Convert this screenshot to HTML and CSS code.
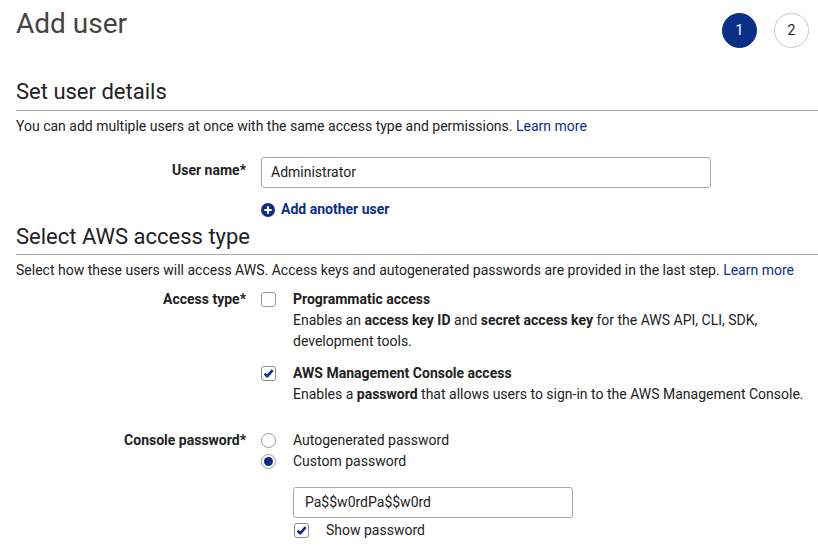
FILE: index.html
```html
<!DOCTYPE html>
<html lang="en">
<head>
<meta charset="utf-8">
<title>Add user</title>
<link rel="stylesheet" href="styles.css">
</head>
<body>
<div class="page">
  <header class="topbar">
    <h1 class="title">Add user</h1>
    <ol class="steps">
      <li class="step step-current">1</li>
      <li class="step">2</li>
    </ol>
  </header>

  <section class="section">
    <h2 class="section-title">Set user details</h2>
    <p class="section-desc">You can add multiple users at once with the same access type and permissions. <a class="link" href="#">Learn more</a></p>
    <div class="form-row row-username">
      <div class="form-label">User name*</div>
      <div class="form-control">
        <div class="text-input username-input">Administrator</div>
        <a class="add-link" href="#">
          <svg class="add-icon" width="14" height="14" viewBox="0 0 14 14" aria-hidden="true">
            <circle cx="7" cy="7" r="7" fill="#0a2f87"/>
            <path d="M7 3.3v7.4M3.3 7h7.4" stroke="#fff" stroke-width="2.2" stroke-linecap="butt"/>
          </svg>
          <span>Add another user</span>
        </a>
      </div>
    </div>
  </section>

  <section class="section">
    <h2 class="section-title section-title-2">Select AWS access type</h2>
    <p class="section-desc">Select how these users will access AWS. Access keys and autogenerated passwords are provided in the last step. <a class="link" href="#">Learn more</a></p>

    <div class="form-row row-access">
      <div class="form-label">Access type*</div>
      <div class="form-control">
        <div class="option">
          <span class="checkbox"></span>
          <div class="option-text">
            <div class="option-title">Programmatic access</div>
            <p class="option-desc">Enables an <strong class="em">access key ID</strong> and <strong class="em">secret access key</strong> for the AWS API, CLI, SDK, development tools.</p>
          </div>
        </div>
        <div class="option option-2">
          <span class="checkbox checked">
            <svg width="13" height="13" viewBox="0 0 13 13" aria-hidden="true"><path d="M2.6 6.6 L5.2 9.4 L10.6 3.2" fill="none" stroke="#0a2f87" stroke-width="2.6" stroke-linejoin="round"/></svg>
          </span>
          <div class="option-text">
            <div class="option-title">AWS Management Console access</div>
            <p class="option-desc">Enables a <strong class="em">password</strong> that allows users to sign-in to the AWS Management Console.</p>
          </div>
        </div>
      </div>
    </div>

    <div class="form-row row-password">
      <div class="form-label">Console password*</div>
      <div class="form-control">
        <div class="radio-option">
          <span class="radio"></span>
          <span class="radio-label">Autogenerated password</span>
        </div>
        <div class="radio-option">
          <span class="radio selected"><span class="radio-dot"></span></span>
          <span class="radio-label">Custom password</span>
        </div>
        <div class="password-block">
          <div class="text-input password-input">Pa$$w0rdPa$$w0rd</div>
          <div class="show-password">
            <span class="checkbox checked">
              <svg width="13" height="13" viewBox="0 0 13 13" aria-hidden="true"><path d="M2.6 6.6 L5.2 9.4 L10.6 3.2" fill="none" stroke="#0a2f87" stroke-width="2.6" stroke-linejoin="round"/></svg>
            </span>
            <span class="show-label">Show password</span>
          </div>
        </div>
      </div>
    </div>
  </section>
</div>
</body>
</html>
```

FILE: styles.css
```css
* { box-sizing: border-box; }

html, body {
  margin: 0;
  padding: 0;
  background: #fff;
}

body {
  font-family: Roboto, "Liberation Sans", Arial, sans-serif;
  font-size: 14px;
  line-height: 21px;
  color: #222;
  overflow: hidden;
}

.page {
  padding-left: 16px;
  width: 818px;
}

.topbar {
  display: flex;
  justify-content: space-between;
  align-items: flex-start;
  height: 48px;
}

.title {
  margin: 7px 0 0 0;
  font-size: 28px;
  line-height: 34px;
  font-weight: 400;
  color: #444;
}

.steps {
  list-style: none;
  margin: 13px 9px 0 0;
  padding: 0;
  display: flex;
  gap: 17px;
}

.step {
  width: 35px;
  height: 35px;
  border-radius: 50%;
  border: 1px solid #c8c8c8;
  display: flex;
  align-items: center;
  justify-content: center;
  font-size: 14px;
  color: #222;
  background: #fff;
}

.step-current {
  background: #0a2f87;
  border-color: #0a2f87;
  color: #fff;
}

.section-title {
  margin: 31px 0 0 0;
  font-size: 22px;
  line-height: 26px;
  font-weight: 400;
  color: #222;
  padding-bottom: 5px;
  border-bottom: 1px solid #a6a6a6;
}

.section-title-2 {
  margin-top: 4px;
  padding-bottom: 4px;
}

.section-desc {
  margin: 5px 0 0 0;
}

.link {
  color: #0a2f87;
  text-decoration: none;
}

.form-row {
  display: grid;
  grid-template-columns: 230px 1fr;
  column-gap: 15px;
  align-items: start;
}

.form-label {
  text-align: right;
  font-weight: 700;
  color: #222;
}

.row-username { margin-top: 20px; }
.row-username .form-label { padding-top: 3px; }

.text-input {
  height: 31px;
  border: 1px solid #aaa;
  border-radius: 3px;
  padding: 0 9px;
  display: flex;
  align-items: center;
  color: #222;
  background: #fff;
}

.username-input { width: 450px; }

.add-link {
  margin-top: 11px;
  display: flex;
  align-items: center;
  gap: 6px;
  color: #0a2f87;
  font-weight: 700;
  text-decoration: none;
}

.add-icon { flex: none; }

.row-access { margin-top: 8px; }

.option {
  display: flex;
  gap: 17px;
}

.option-2 { margin-top: 11px; }

.checkbox {
  flex: none;
  width: 15px;
  height: 15px;
  margin-top: 3px;
  border: 1px solid #9a9a9a;
  border-radius: 3px;
  background: #fff;
  display: flex;
  align-items: center;
  justify-content: center;
}

.checkbox.checked { border-color: #8a8a8a; }

.option-title {
  font-weight: 700;
}

.option-desc {
  margin: 0;
}

.em { font-weight: 700; }

.row-password { margin-top: 25px; }

.radio-option {
  display: flex;
  gap: 17px;
}

.radio {
  flex: none;
  width: 15px;
  height: 15px;
  margin-top: 3px;
  border: 1px solid #9a9a9a;
  border-radius: 50%;
  background: #fff;
  display: flex;
  align-items: center;
  justify-content: center;
}

.radio-dot {
  width: 9px;
  height: 9px;
  border-radius: 50%;
  background: #0a2f87;
}

.password-block {
  margin-left: 32px;
  margin-top: 15px;
}

.password-input {
  width: 280px;
  padding-left: 11px;
}

.show-password {
  margin-top: 2px;
  display: flex;
  gap: 17px;
}

.show-password .checkbox { margin-left: 1px; }
```
